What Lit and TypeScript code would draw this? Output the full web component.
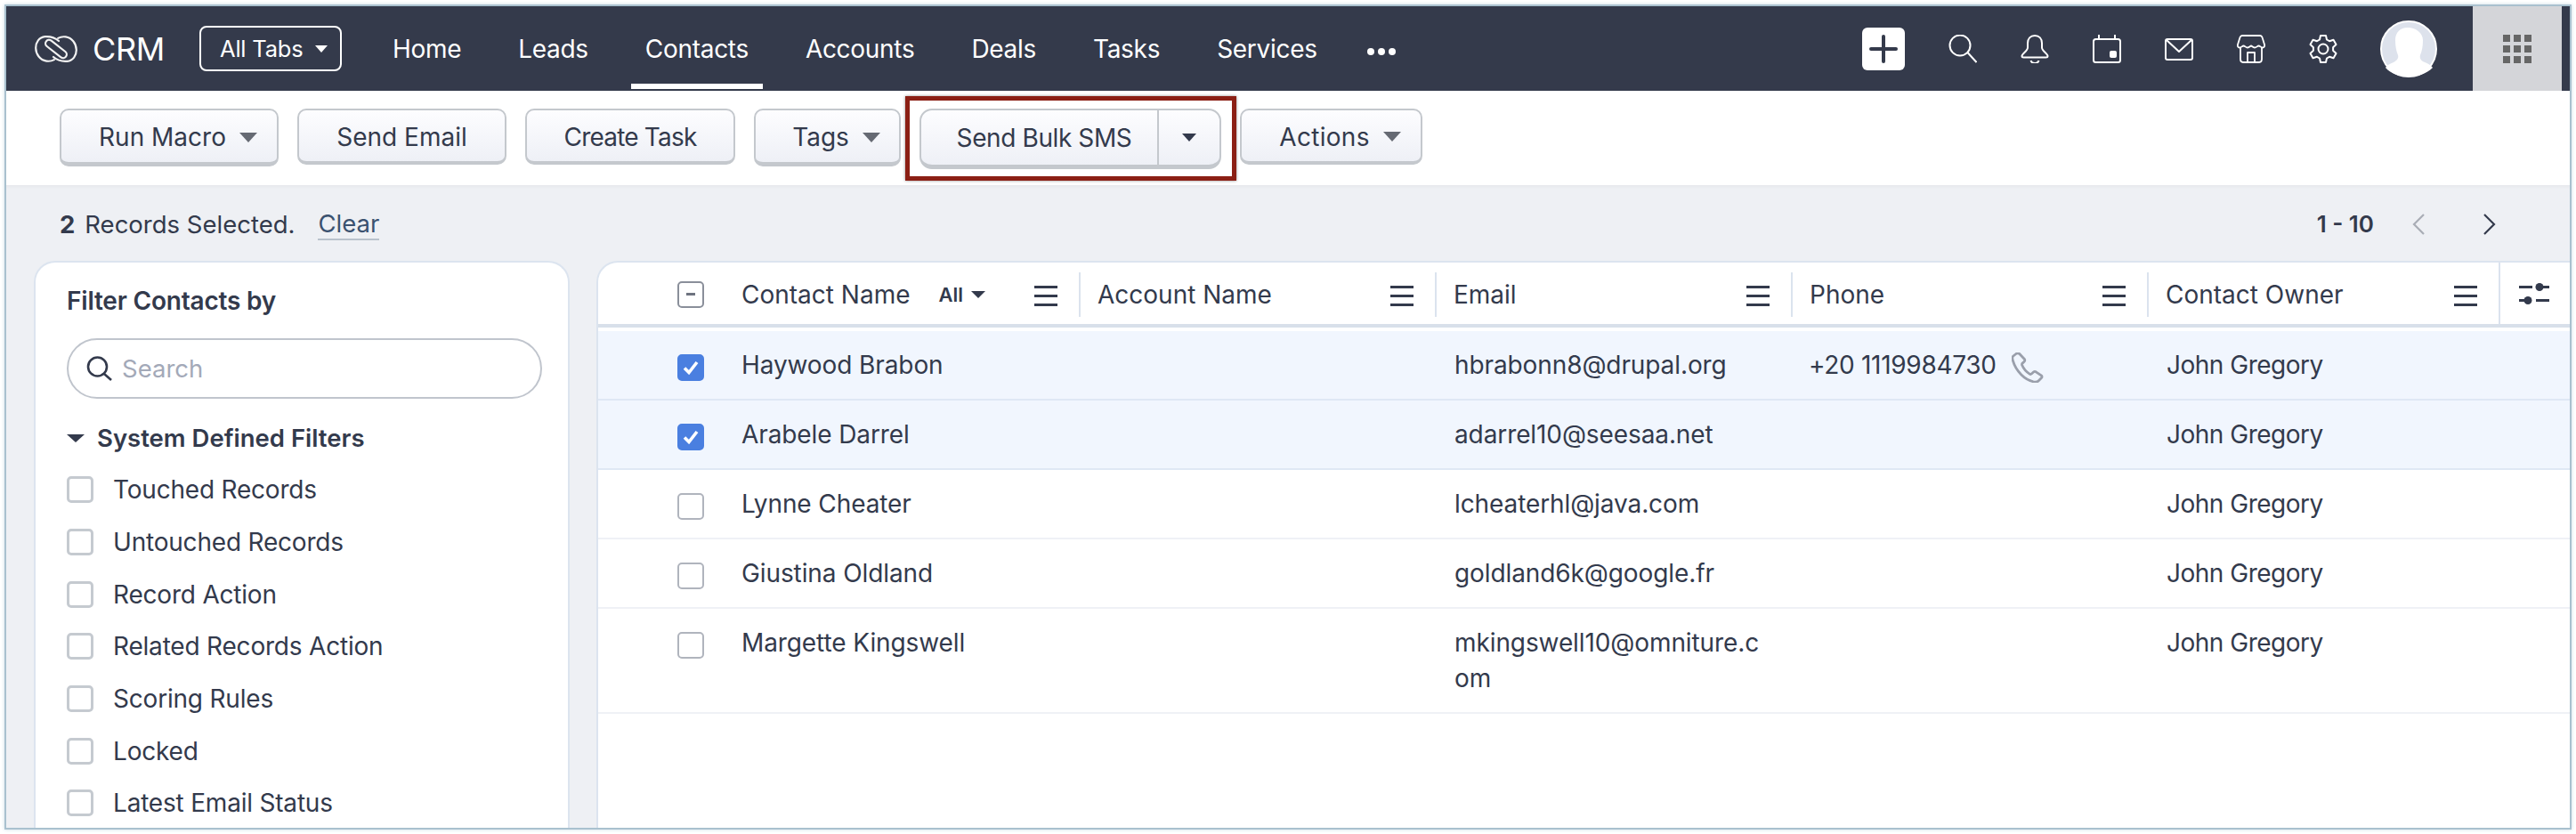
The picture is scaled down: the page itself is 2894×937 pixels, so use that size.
import { LitElement, html, css, svg } from "lit";
import { customElement } from "lit/decorators.js";

const caret = (cls: string) => html`<span class="caret ${cls}"></span>`;

const icons = {
  logo: svg`<svg class="logo" width="48" height="30" viewBox="0 0 48 30" fill="none" stroke="#f2f2f2" stroke-width="2.2" stroke-linecap="round">
    <path d="M27 6C23 2.5 17 .8 11.5 1.2 5 1.8 1.1 7.5 1.2 14c.1 7 4.800 13.500 12 14.600 3.400.5 6.300-.2 8.600-1.500"/>
    <path d="M21 24C25 27.500 31 29.200 36.500 28.800 43 28.200 46.900 22.500 46.800 16c-.1-7-4.800-13.500-12-14.600-3.400-.5-6.300.2-8.600 1.500"/>
    <rect x="10" y="11" width="28" height="8" rx="4" transform="rotate(38 24 15)"/>
  </svg>`,
  search: svg`<svg width="32" height="32" viewBox="0 0 32 32" fill="none" stroke="#fff" stroke-width="2"><circle cx="13" cy="12" r="11.500"/><path d="M21.500 20l10 11"/></svg>`,
  bell: svg`<svg width="32" height="32" viewBox="0 0 32 32" fill="none" stroke="#fff" stroke-width="2" stroke-linejoin="round"><path d="M16 1c-5 0-8 3.500-8 8.500v5c0 4-6.500 6.500-6.500 9.500 0 1 .8 1.500 2 1.500h25c1.200 0 2-.5 2-1.500 0-3-6.500-5.500-6.500-9.500v-5C24 4.500 21 1 16 1z"/><path d="M11.500 29c.5 2 2.200 3 4.500 3s4-1 4.500-3"/></svg>`,
  cal: svg`<svg width="32" height="32" viewBox="0 0 32 32" fill="none" stroke="#fff" stroke-width="2"><rect x="1" y="5" width="30" height="26" rx="2.500"/><path d="M7 0v5M25 0v5"/><rect x="19" y="18" width="8" height="8" rx="2" fill="#fff" stroke="none"/></svg>`,
  mail: svg`<svg width="32" height="32" viewBox="0 0 32 32" fill="none" stroke="#fff" stroke-width="2" stroke-linejoin="round"><rect x="1" y="5" width="30" height="23" rx="2"/><path d="M2 6l14 13L30 6"/></svg>`,
  shop: svg`<svg width="32" height="32" viewBox="0 0 32 32" fill="none" stroke="#fff" stroke-width="1.800" stroke-linejoin="round"><path d="M6 1h20c1.500 0 2 .8 2.500 2L31 11c.5 2-.5 3.500-2 3.500-2 0-3-2-4.500-2s-2.500 2-4.500 2-3-2-4-2-2 2-4 2-3-2-4.500-2-2.500 2-4.500 2c-1.500 0-2.500-1.500-2-3.500L3.500 3C4 1.800 4.500 1 6 1z"/><path d="M4 14v13.500C4 29.500 5 31 7 31h18c2 0 3-1.500 3-3.500V14"/><path d="M12 31v-11h8v11"/></svg>`,
  gear: svg`<svg width="32" height="32" viewBox="0 0 32 32" fill="none" stroke="#fff" stroke-width="2" stroke-linejoin="round"><path d="M13 1h6l1 4.500 3 1.700 4.500-1.400 3 5.200-3.400 3.200v3.600l3.400 3.200-3 5.200-4.500-1.400-3 1.700L19 31h-6l-1-4.500-3-1.700-4.500 1.400-3-5.200 3.400-3.200v-3.600L1.500 11l3-5.200L9 7.200l3-1.700z"/><circle cx="16" cy="16" r="5.500"/></svg>`,
  avatar: svg`<svg width="64" height="64" viewBox="0 0 64 64"><circle cx="32" cy="32" r="31" fill="#dde2ec" stroke="#fff" stroke-width="2"/><path fill="#fff" d="M31 8c-9 0-14 6-14 14 0 7 1 12 3 17 1 3-1 6-5 8-4 1.500-7 3-9 6 6 7 16 10 26 10s20-3 27-10c-2-3-6-5-10-6.500-3-1.500-5-4-4-7.500 2-5 3-10 3-17 0-8-8-14-17-14z"/></svg>`,
  chevL: svg`<svg width="16" height="24" viewBox="0 0 16 24" fill="none" stroke="#a9adb6" stroke-width="2.200"><path d="M14 1L3 12l11 11"/></svg>`,
  chevR: svg`<svg width="16" height="24" viewBox="0 0 16 24" fill="none" stroke="#333a4c" stroke-width="2.200"><path d="M2 1l11 11L2 23"/></svg>`,
  find: svg`<svg width="30" height="28" viewBox="0 0 30 28" fill="none" stroke="#333a4c" stroke-width="2.600"><circle cx="12.500" cy="12" r="10.500"/><path d="M20 20l8 7"/></svg>`,
  phone: svg`<svg width="36" height="34" viewBox="0 0 36 34" fill="none" stroke="#9a9fab" stroke-width="2.800" stroke-linejoin="round"><path d="M5 1.500L1.800 4C.5 5 .7 7 1.300 9c2 7 5.500 12 9.500 16 3.500 3.500 8 6.500 13.500 7.800 2 .4 4.500.5 6-1l3.200-3.200c.8-.8.8-2-.2-2.800l-6-4c-1-.6-2-.5-2.800.2l-2.200 2c-.6.5-1.400.6-2.200.1-3.200-2-6.800-6-8.400-9.800-.3-.8-.2-1.600.4-2.200l2-1.800c.8-.8.9-1.700.3-2.800L9 1.800C8 .5 6.300.5 5 1.500z"/></svg>`,
  tune: svg`<svg width="34" height="24" viewBox="0 0 34 24" fill="#333a4c"><rect x="0" y="3" width="15" height="3"/><circle cx="23" cy="4.500" r="4.500"/><rect x="26" y="3" width="8" height="3"/><rect x="19" y="18" width="15" height="3"/><circle cx="10" cy="19.500" r="4.500"/><rect x="0" y="18" width="8" height="3"/></svg>`,
  check: svg`<svg width="18" height="16" viewBox="0 0 18 16" fill="none" stroke="#fff" stroke-width="3.600"><path d="M2 8.500l5 5L16 2"/></svg>`,
};

const NAV = ["Home", "Leads", "Contacts", "Accounts", "Deals", "Tasks", "Services"];
const FILTERS = ["Touched Records", "Untouched Records", "Record Action", "Related Records Action", "Scoring Rules", "Locked", "Latest Email Status"];
const COLS = ["Account Name", "Email", "Phone", "Contact Owner"];
const ROWS = [
  { name: "Haywood Brabon", email: "hbrabonn8@drupal.org", phone: "+20 1119984730", sel: true },
  { name: "Arabele Darrel", email: "adarrel10@seesaa.net", phone: "", sel: true },
  { name: "Lynne Cheater", email: "lcheaterhl@java.com", phone: "", sel: false },
  { name: "Giustina Oldland", email: "goldland6k@google.fr", phone: "", sel: false },
  { name: "Margette Kingswell", email: "mkingswell10@omniture.com", phone: "", sel: false },
];

@customElement("app-root")
export class AppRoot extends LitElement {
  static styles = css`
    :host { display: block; width: 2894px; height: 937px; overflow: hidden; background: #fff;
      font-family: Inter, "Noto Sans", sans-serif; color: #333a4c; box-sizing: border-box; padding: 5px; }
    * { box-sizing: border-box; }
    svg { display: block; flex: none; }
    .frame { width: 2884px; height: 927px; border: 2px solid #a9c1cf; display: flex; flex-direction: column; overflow: hidden; background: #fff; box-shadow: 0 0 4px #c9dbe4; }

    .nav { height: 95px; flex: none; background: #343a4b; color: #fff; display: flex; align-items: center; padding: 0 9px 0 32px; }
    .brand { font-size: 36px; margin-left: 17px; width: 80px; letter-spacing: -.3px; margin-right: 40px; }
    .alltabs { width: 160px; height: 51px; border: 2px solid #fff; border-radius: 8px; font-size: 25.500px; display: flex; align-items: center; padding-left: 21px; margin-right: 57px; letter-spacing: -.2px; }
    .caret { width: 0; height: 0; border-style: solid; border-color: transparent; border-bottom-width: 0; display: inline-block; flex: none; }
    .caret.w { border-width: 8px 7px 0; border-top-color: #fff; margin-left: 13px; }
    .caret.g { border-width: 11px 10px 0; border-top-color: #666a73; }
    .caret.d { border-width: 9px 8px 0; border-top-color: #333a4c; }
    .tabs { display: flex; height: 100%; gap: 32px; margin-left: -16px; }
    .tab { height: 100%; padding: 0 16px; display: flex; align-items: center; font-size: 28px; position: relative; letter-spacing: -.3px; }
    .tab.on::after { content: ""; position: absolute; left: 0; right: 0; bottom: 2px; height: 6px; background: #fff; }
    .dots { display: flex; gap: 4px; margin-left: 8px; align-self: center; }
    .dots i { width: 8px; height: 8px; border-radius: 50%; background: #fff; display: block; margin-top: 6px; }
    .right { margin-left: auto; display: flex; align-items: center; height: 100%; }
    .plus { width: 48px; height: 48px; background: #fff; border-radius: 6px; position: relative; margin-right: 49px; }
    .plus::before { content: ""; position: absolute; left: 8px; right: 8px; top: 22px; height: 4px; border-radius: 2px; background: #343a4b; }
    .plus::after { content: ""; position: absolute; top: 8px; bottom: 8px; left: 22px; width: 4px; border-radius: 2px; background: #343a4b; }
    .nicons { display: flex; gap: 49px; margin-right: 48px; }
    .avatar { margin-right: 40px; }
    .apps { width: 100px; height: 100%; background: #d4d5d9; display: flex; align-items: center; justify-content: center; }
    .apps div { display: grid; grid-template-columns: repeat(3, 8px); grid-auto-rows: 8px; gap: 4px; }
    .apps i { background: #666; display: block; }

    .toolbar { height: 106px; flex: none; display: flex; align-items: flex-start; gap: 21px; padding: 20px 0 0 60px; background: #fff; }
    .btn { height: 63px; border: 2px solid #c4c8cd; border-bottom-width: 4px; border-radius: 10px; background: linear-gradient(#fdfdff, #eef0f6); display: flex; align-items: center; justify-content: center; font-size: 28px; padding-top: 2px; flex: none; white-space: nowrap; }
    .btn.tall { height: 65px; border-bottom-width: 5px; gap: 15px; padding-left: 20px; }
    .w-run { width: 246px; }
    .w-mail { width: 235px; }
    .w-task { width: 236px; letter-spacing: -.8px; }
    .w-tags { width: 165px; }
    .w-act { width: 205px; gap: 15px; padding-left: 20px; letter-spacing: .3px; }
    .sms { width: 339px; height: 68px; padding: 0; position: relative; justify-content: flex-start; border-bottom-width: 5px; border-radius: 14px; }
    .sms-main { width: 267px; height: 100%; display: flex; align-items: center; justify-content: center; border-right: 2px solid #c4c8cd; padding: 0 0 0 11px; letter-spacing: -.4px; }
    .sms-more { flex: 1; display: flex; align-items: center; justify-content: center; }
    .mark { position: absolute; left: -18px; right: -19px; top: -16px; bottom: -18px; border: 5px solid #8b1f14; box-shadow: 0 0 3px rgba(0,0,0,.45); pointer-events: none; }

    .band { height: 85px; flex: none; background: #eef0f4; display: flex; align-items: center; padding: 2px 0 0 60px; font-size: 27.500px; box-shadow: inset 0 4px 4px -3px rgba(0,0,0,.05); }
    .band b { font-weight: 700; margin-right: 11px; }
    .clear { margin-left: 26px; color: #3b5270; border-bottom: 2px solid #b9c2cc; line-height: 34px; }
    .pager { margin-left: auto; display: flex; align-items: center; margin-right: 82px; font-weight: 600; font-size: 26px; }
    .pager span { margin-right: 42px; }
    .pager svg + svg { margin-left: 64px; }

    .content { flex: 1; min-height: 0; background: #eef0f4; display: flex; gap: 30px; padding-left: 31px; }
    .side { width: 602px; background: #fff; border: 2px solid #dce4ef; border-bottom: 0; border-radius: 24px 24px 0 0; padding: 25px 0 0 35px; overflow: hidden; }
    .side h3 { margin: 0; font-size: 28px; font-weight: 600; line-height: 36px; letter-spacing: -.2px; }
    .find { width: 534px; height: 68px; border: 2px solid #c0c5cd; border-radius: 34px; margin-top: 24px; display: flex; align-items: center; padding-left: 20px; gap: 10px; font-size: 27.500px; color: #a3a9b8; }
    .sys { display: flex; align-items: center; gap: 14px; margin-top: 26px; font-size: 27.500px; font-weight: 600; line-height: 36px; }
    .sys .caret { border-width: 9px 10px 0; border-top-color: #333a4c; }
    .fl { display: flex; flex-direction: column; margin-top: 11px; }
    .fi { height: 58.700px; display: flex; align-items: center; gap: 22px; font-size: 28px; letter-spacing: -.2px; }
    .fi i { width: 30px; height: 30px; border: 3px solid #c5cad0; border-radius: 5px; display: block; flex: none; }

    .table { flex: 1; min-width: 0; background: #fff; border: solid #dce4ef; border-width: 2px 0 0 2px; border-top-left-radius: 24px; overflow: hidden; }
    .hd, .row { display: grid; grid-template-columns: 540px 400px 400px 400px 395px 1fr; }
    .hd { height: 73px; border-bottom: 4px solid #d8e0ea; font-size: 28px; margin-bottom: 4px; }
    .hc { display: flex; align-items: center; position: relative; padding: 2px 0 0 21px; height: 69px; }
    .hc::before { content: ""; position: absolute; left: 0; top: 11px; height: 50px; width: 2px; background: #dbe3ee; }
    .hc.first { padding-left: 89px; }
    .hc.first::before { display: none; }
    .hc.last { padding: 0 0 0 21px; border-left: 2px solid #dbe3ee; }
    .hc.last::before { display: none; }
    .ham { position: absolute; right: 24px; top: 26px; width: 26px; height: 23px; border-top: 3px solid #333a4c; border-bottom: 3px solid #333a4c; }
    .ham::after { content: ""; position: absolute; left: 0; right: 0; top: 7px; height: 3px; background: #333a4c; }
    .cb { width: 30px; height: 30px; border-radius: 5px; border: 2.500px solid #b0b4bd; display: flex; align-items: center; justify-content: center; flex: none; background: #fff; margin-right: 42px; }
    .cb.hd-cb { border-color: #8a8f9a; }
    .cb.hd-cb::after { content: ""; width: 10px; height: 3px; background: #6e7380; display: block; }
    .cb.on { background: #4a7fe0; border-color: #4a7fe0; }
    .all { margin-left: 32px; font-size: 22px; font-weight: 600; display: flex; align-items: center; gap: 9px; }
    .all .caret { border-width: 8px 8px 0; border-top-color: #333a4c; }
    .row { border-bottom: 2px solid #eff1f6; font-size: 28px; line-height: 40px; letter-spacing: -.1px; }
    .row.sel { background: #f1f6fe; border-bottom-color: #dfe8f5; }
    .c { padding: 18px 22px; word-break: break-all; min-height: 76px; }
    .c.first { padding-left: 89px; display: flex; align-items: flex-start; }
    .c.first .cb { margin-top: 8px; }
    .c.ph { display: flex; gap: 17px; white-space: nowrap; padding-left: 20px; letter-spacing: -.3px; }
    .c.ph svg { margin-top: 6px; }
    .c.owner { letter-spacing: -.5px; }
  `;

  render() {
    return html`<div class="frame">
      <div class="nav">
        ${icons.logo}
        <span class="brand">CRM</span>
        <div class="alltabs">All Tabs${caret("w")}</div>
        <div class="tabs">
          ${NAV.map((t) => html`<div class="tab ${t === "Contacts" ? "on" : ""}">${t}</div>`)}
          <div class="dots"><i></i><i></i><i></i></div>
        </div>
        <div class="right">
          <div class="plus"></div>
          <div class="nicons">${icons.search}${icons.bell}${icons.cal}${icons.mail}${icons.shop}${icons.gear}</div>
          <div class="avatar">${icons.avatar}</div>
          <div class="apps"><div>${Array.from({ length: 9 }, () => html`<i></i>`)}</div></div>
        </div>
      </div>

      <div class="toolbar">
        <div class="btn tall w-run">Run Macro${caret("g")}</div>
        <div class="btn w-mail">Send Email</div>
        <div class="btn w-task">Create Task</div>
        <div class="btn tall w-tags">Tags${caret("g")}</div>
        <div class="btn sms">
          <div class="sms-main">Send Bulk SMS</div>
          <div class="sms-more">${caret("d")}</div>
          <div class="mark"></div>
        </div>
        <div class="btn w-act">Actions${caret("g")}</div>
      </div>

      <div class="band">
        <b>2</b>Records Selected.<span class="clear">Clear</span>
        <div class="pager"><span>1 - 10</span>${icons.chevL}${icons.chevR}</div>
      </div>

      <div class="content">
        <aside class="side">
          <h3>Filter Contacts by</h3>
          <div class="find">${icons.find}Search</div>
          <div class="sys">${caret("")}System Defined Filters</div>
          <div class="fl">${FILTERS.map((f) => html`<div class="fi"><i></i>${f}</div>`)}</div>
        </aside>
        <section class="table">
          <div class="hd">
            <div class="hc first"><span class="cb hd-cb"></span>Contact Name<span class="all">All${caret("")}</span><span class="ham"></span></div>
            ${COLS.map((c) => html`<div class="hc">${c}<span class="ham"></span></div>`)}
            <div class="hc last">${icons.tune}</div>
          </div>
          ${ROWS.map((r) => html`<div class="row ${r.sel ? "sel" : ""}">
            <div class="c first"><span class="cb ${r.sel ? "on" : ""}">${r.sel ? icons.check : ""}</span>${r.name}</div>
            <div class="c"></div>
            <div class="c">${r.email}</div>
            <div class="c ph">${r.phone}${r.phone ? icons.phone : ""}</div>
            <div class="c owner">John Gregory</div>
            <div class="c"></div>
          </div>`)}
        </section>
      </div>
    </div>`;
  }
}
